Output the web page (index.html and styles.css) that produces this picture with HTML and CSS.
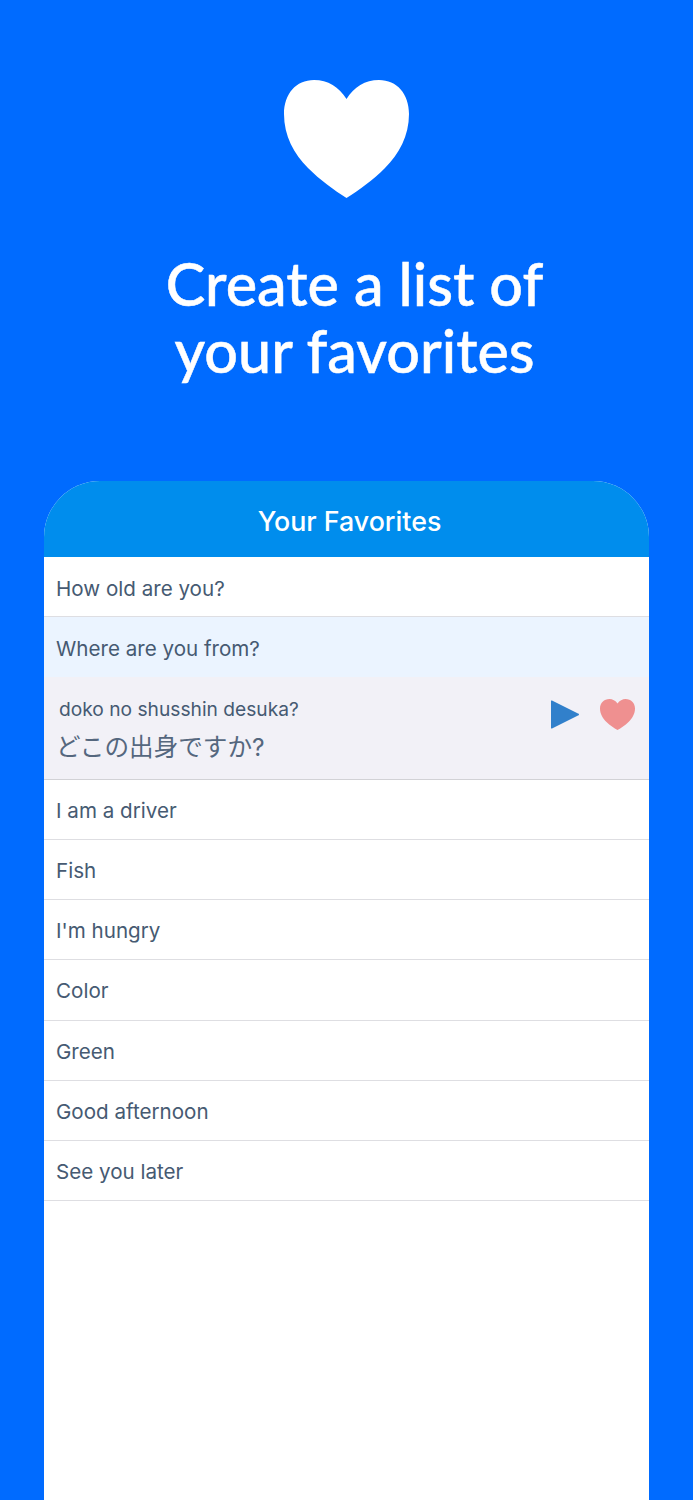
FILE: index.html
```html
<!DOCTYPE html>
<html lang="en">
    <head>
        <title>Favorites</title>
        <meta charset="utf-8">
        <link rel="stylesheet" href="styles.css">
    </head>
    <body>
        <div class="hero">
            <svg class="hero-heart" viewBox="0 0 125 118">
                <path fill="#fff" d="M62.5 19C55 7 44 0 30 0 12 0 0 14 0 34c0 22 10 40 24 54 12 12 26 22 38.5 30C75 110 89 100 101 88c14-14 24-32 24-54C125 14 113 0 95 0 81 0 70 7 62.5 19z"/>
            </svg>
            <h1>Create a list of<br>your favorites</h1>
        </div>

        <div class="card">
            <div class="card-head">Your Favorites</div>
            <div class="row row-top">How old are you?</div>
            <div class="row row-top row-hover">Where are you from?</div>
            <div class="row-open">
                <div class="phrase">
                    <div class="romaji">doko no shusshin desuka?</div>
                    <div class="kana">どこの出身ですか?</div>
                </div>
                <svg class="icon-play" viewBox="0 0 28 31">
                    <path fill="#3180cb" d="M1 1.5 27 14.5a1 1 0 0 1 0 2L1 29.5a.7.7 0 0 1-1-.7V2.2a.7.7 0 0 1 1-.7z"/>
                </svg>
                <svg class="icon-heart" viewBox="0 0 35 31">
                    <path fill="#ef9090" d="M17.5 4.5C15.5 1.5 12.5 0 9.5 0 4 0 0 4 0 9.5c0 5.5 3 10 6.5 13.5 3.5 3.5 7.5 6 11 8 3.5-2 7.5-4.5 11-8C32 19.5 35 15 35 9.5 35 4 31 0 25.5 0c-3 0-6 1.5-8 4.5z"/>
                </svg>
            </div>
            <div class="row">I am a driver</div>
            <div class="row">Fish</div>
            <div class="row">I'm hungry</div>
            <div class="row">Color</div>
            <div class="row">Green</div>
            <div class="row">Good afternoon</div>
            <div class="row">See you later</div>
        </div>
    </body>
</html>
```

FILE: styles.css
```css
html, body {
    height: 1500px;
}
body {
    margin: 0;
    overflow: hidden;
    background-color: #006bff;
    font-family: Inter, "Noto Sans CJK JP", sans-serif;
}

.hero {
    display: flex;
    flex-direction: column;
    align-items: center;
    padding-top: 80px;
    height: 481px;
    box-sizing: border-box;
}
.hero-heart {
    width: 125px;
    height: 118px;
}
h1 {
    margin: 52px 0 0;
    padding-left: 16px;
    color: #fff;
    font-family: Lato, sans-serif;
    font-size: 59.3px;
    font-weight: 500;
    line-height: 67px;
    text-align: center;
    -webkit-text-stroke: 0.5px #fff;
}

.card {
    margin: 0 44px;
    height: 1019px;
    background-color: #fff;
    border-radius: 56px 56px 0 0;
}
.card-head {
    height: 76px;
    padding-left: 6px;
    background-color: #008ded;
    border-radius: 56px 56px 0 0;
    color: #fff;
    font-size: 26.8px;
    font-weight: 500;
    line-height: 81px;
    text-align: center;
}

.row {
    height: 60.15px;
    box-sizing: border-box;
    padding-left: 12px;
    border-bottom: 1px solid #dedee2;
    color: #465a72;
    font-size: 20.6px;
    line-height: 62px;
}
.row-top {
    height: 60px;
    line-height: 63px;
}
.row-hover {
    background-color: #ebf4ff;
    border-bottom: 0;
}

.row-open {
    display: flex;
    align-items: flex-start;
    height: 103px;
    box-sizing: border-box;
    padding: 21px 14px 0 12px;
    background-color: #f2f1f7;
    border-bottom: 1px solid #d2d2d6;
    color: #465a72;
}
.phrase {
    flex: 1;
}
.romaji {
    padding-left: 3px;
    font-size: 19.2px;
    line-height: 22px;
}
.kana {
    margin-top: 11px;
    color: #55677e;
    font-size: 24.6px;
    line-height: 32px;
}
.icon-play {
    width: 28px;
    height: 31px;
    margin-top: 1px;
}
.icon-heart {
    width: 35px;
    height: 31px;
    margin-left: 21px;
    margin-top: 1px;
}
```
